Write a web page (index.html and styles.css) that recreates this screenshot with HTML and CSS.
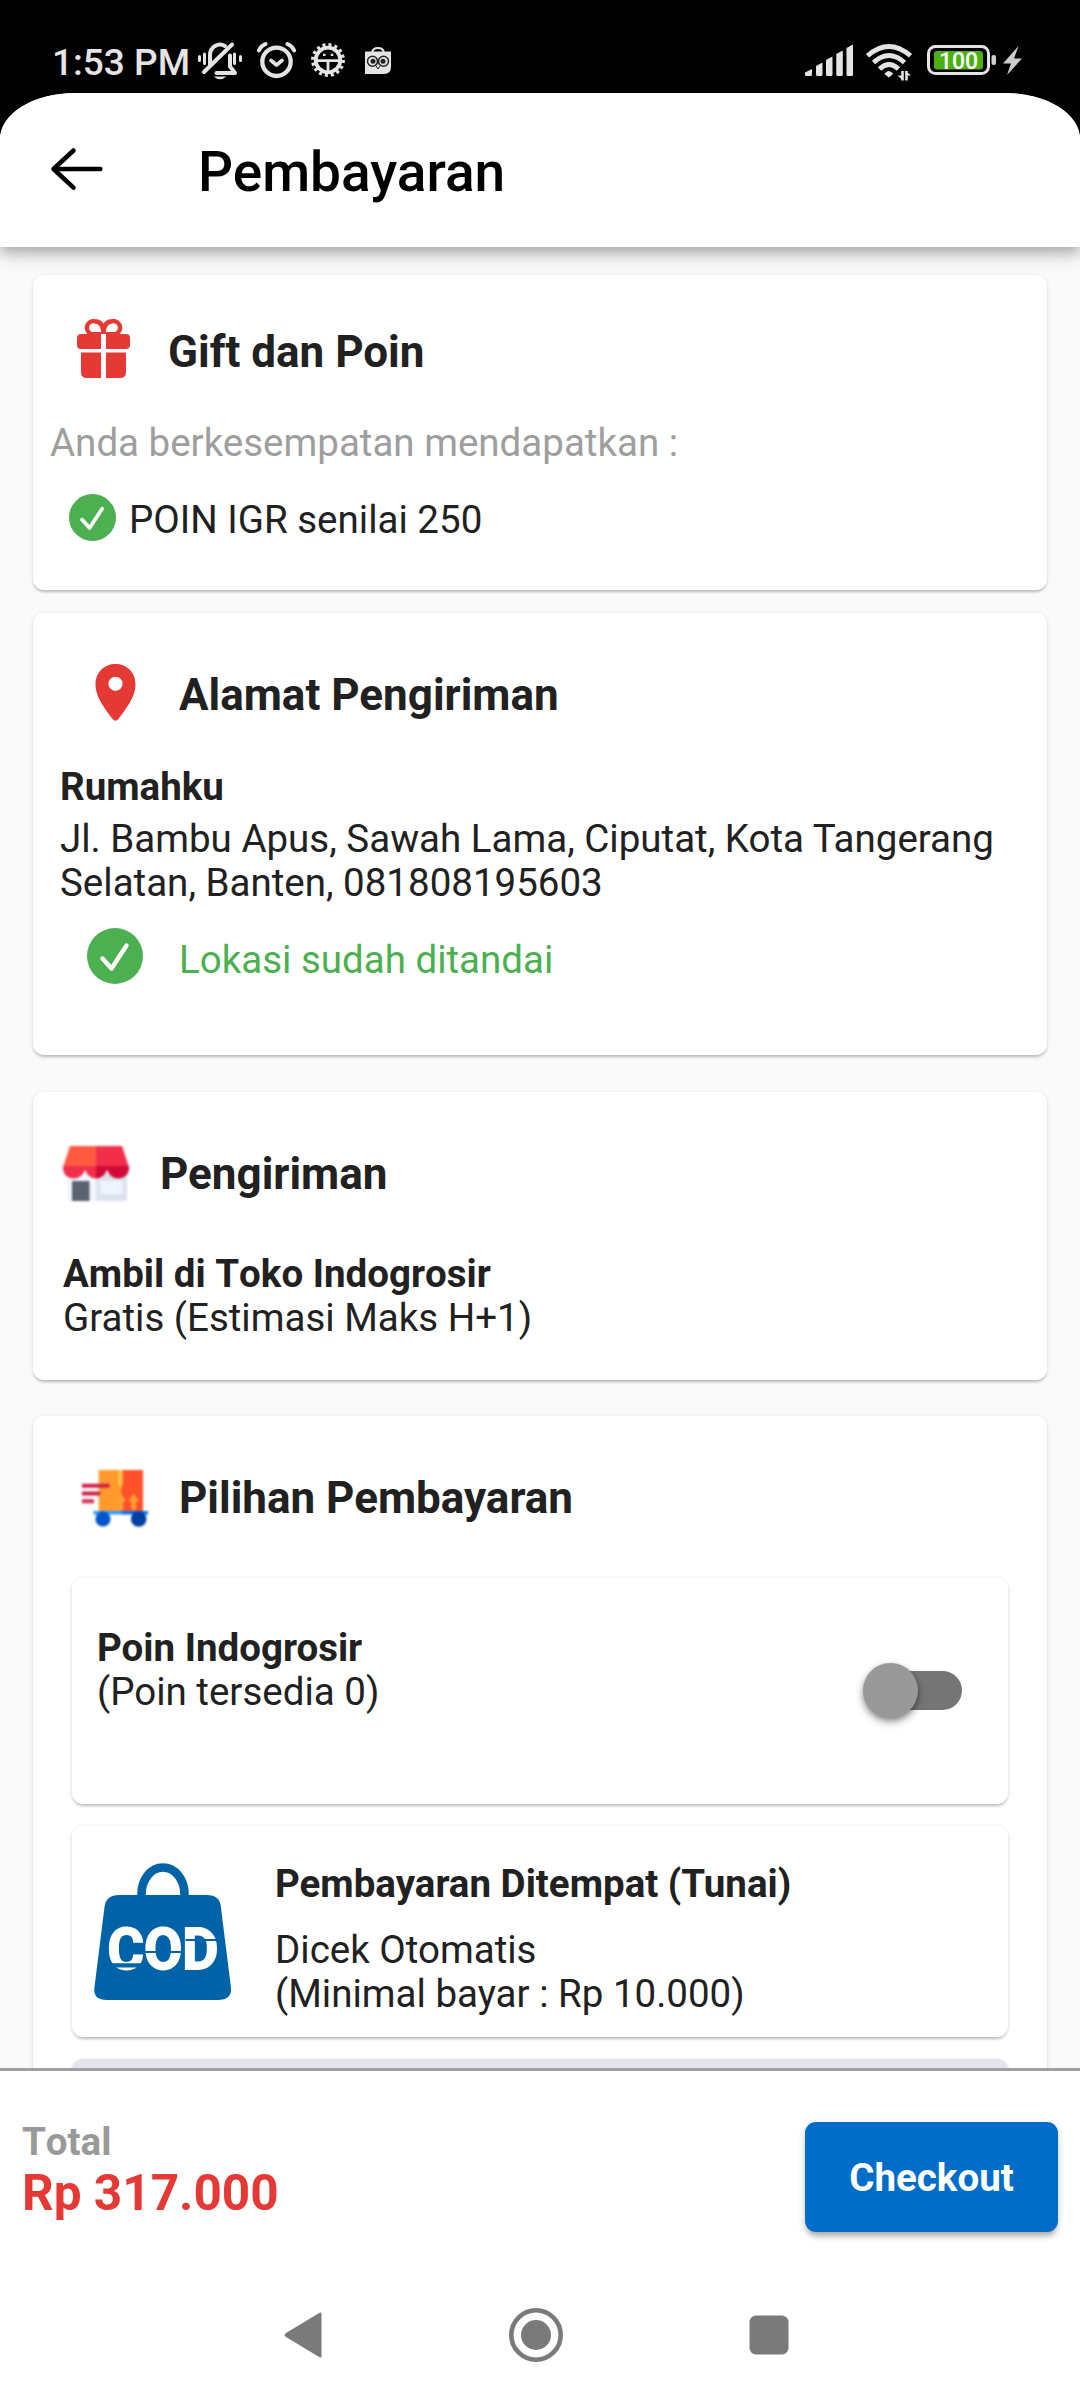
FILE: index.html
```html
<!DOCTYPE html>
<html lang="id">
<head>
<meta charset="utf-8">
<title>Pembayaran</title>
<link rel="stylesheet" href="styles.css">
</head>
<body>
<div class="screen">
  <div class="status">
    <span class="clock">1:53 PM</span>
    <svg class="status-left" viewBox="196 38 200 44" width="200" height="44">
      <g fill="none" stroke="#e4e4e4" stroke-width="4" stroke-linecap="round" stroke-linejoin="round">
        <path d="M199.500 56.500v4M204.500 54v9.500M234.500 54v9.500M240.500 56.500v4" stroke-width="3"/>
        <path d="M210 65.500V55a10 10.500 0 0 1 15-9"/>
        <path d="M216.500 73H235l-5-6.500V55.500"/>
        <path d="M204 72L232 44.500"/>
      </g>
      <path d="M213.500 76.500h13q-6.500 5.500-13 0z" fill="#e4e4e4"/>
      <g fill="none" stroke="#e4e4e4" stroke-linecap="round" stroke-linejoin="round">
        <circle cx="276.500" cy="61.800" r="14.200" stroke-width="4.300"/>
        <path d="M271 60.500l5.500 4.500 5.500-4.500" stroke-width="3.600"/>
        <path d="M258.800 50.500q2-4.500 6.800-6.500M294.200 50.500q-2-4.500-6.800-6.500" stroke-width="4"/>
      </g>
      <circle cx="328" cy="60" r="15.200" fill="none" stroke="#e4e4e4" stroke-width="3.500" stroke-dasharray="3 2.969"/>
      <circle cx="328" cy="60" r="12.300" fill="none" stroke="#e4e4e4" stroke-width="3.800"/>
      <path d="M316 60.700h24M328 61v12" stroke="#e4e4e4" stroke-width="2.800"/>
      <path d="M323 54.800h2.500M330.800 54.800h2.500" stroke="#e4e4e4" stroke-width="2.200"/>
      <path d="M365 51.500h26v15.500q0 7-7 7h-19z" fill="#e4e4e4"/>
      <path d="M372.300 52q.7-4 5.700-4t5.700 4" fill="none" stroke="#e4e4e4" stroke-width="2.200"/>
      <g fill="#e4e4e4" stroke="#222" stroke-width="1.500"><circle cx="372.500" cy="61.300" r="5"/><circle cx="383.500" cy="61.300" r="5"/></g>
      <circle cx="373" cy="61.300" r="2.500" fill="#222"/><circle cx="383" cy="61.300" r="2.500" fill="#222"/>
      <path d="M375.500 65l2.500-1.500 2.500 1.500-2.500 4z" fill="#e4e4e4" stroke="#222"/>
    </svg>
    <svg class="status-right" viewBox="802 38 222 44" width="222" height="44">
      <path fill="#e4e4e4" d="M805 72.500l6-3q1-.5 1 .5v4.500q0 1.500-1.500 1.500H806.500q-1.500 0-1.500-1.500zM816 66l5.500-3q1-.5 1 .5v11q0 1.500-1.500 1.500h-3.500q-1.500 0-1.500-1.500zM826 60l5.500-3q1-.5 1 .5v17q0 1.500-1.500 1.500h-3.500q-1.500 0-1.500-1.500zM836.300 54l5.500-3q1-.5 1 .5v23q0 1.500-1.500 1.500h-3.500q-1.500 0-1.500-1.500zM846.500 48l5.500-3q1-.5 1 .5v29q0 1.500-1.500 1.500h-3.500q-1.500 0-1.500-1.500z"/>
      <g fill="none" stroke="#e4e4e4" stroke-width="4.800">
        <path d="M867.500 55.800q21.500-18.500 43 0"/>
        <path d="M873.500 62.500q15.500-14 31 0"/>
        <path d="M879.500 69q9.500-9 19 0"/>
      </g>
      <path d="M884.500 73.500q4.200-5 8.500 0v.5l-4.200 3.500-4.300-3.500z" fill="#e4e4e4"/>
      <path d="M902.500 71v9.500M906.500 80.500v-9.500" stroke="#e4e4e4" stroke-width="2.600"/>
      <path d="M897.500 75.500h4l1.500 5zM905.500 71l5.500 4.500h-4z" fill="#e4e4e4"/>
      <rect x="928.500" y="46.500" width="60" height="27" rx="7" fill="#000" stroke="#e4e4e4" stroke-width="3"/>
      <rect x="934" y="51" width="49" height="18.500" rx="3" fill="#4cb013"/>
      <rect x="991.500" y="55" width="4.500" height="10" rx="2" fill="#d0d0d0"/>
      <text x="958.500" y="69" text-anchor="middle" class="battery-text">100</text>
      <path d="M1018.500 46L1003 63.500h8L1007 75l15-16.500h-8z" fill="#ccc"/>
    </svg>
  </div>

  <div class="app">
    <header class="appbar">
      <svg width="56" height="46" viewBox="0 0 56 46"><path d="M51.300 23H4.800M24.500 4.500L4.500 23l20 18.700" fill="none" stroke="#000" stroke-width="4.500" stroke-linecap="round" stroke-linejoin="round"/></svg>
      <h1>Pembayaran</h1>
    </header>

    <main class="content">
      <section class="card gift">
        <div class="head">
          <svg width="53" height="59" viewBox="0 0 53 59" fill="#e53935">
            <path d="M4 15h20v15H4q-4 0-4-4v-7q0-4 4-4zM29 15h20q4 0 4 4v7q0 4-4 4H29zM4 33.500h20V59H10q-6 0-6-6zM29 33.500h20V53q0 6-6 6H29z"/>
            <path d="M24 15.300H17A6.600 6.600 0 1 1 17.500 2.200Q26.500 2.200 26.500 15Q26.500 2.200 35.500 2.200A6.600 6.600 0 1 1 36 15.300H29" fill="none" stroke="#e53935" stroke-width="4.400"/>
          </svg>
          <h2>Gift dan Poin</h2>
        </div>
        <p class="muted">Anda berkesempatan mendapatkan :</p>
        <div class="row">
          <svg width="47" height="47" viewBox="0 0 56 56"><circle cx="28" cy="28" r="28" fill="#4caf50"/><path d="M15.500 30.500l9 10L39.500 17.500" fill="none" stroke="#fff" stroke-width="4.400" stroke-linecap="round" stroke-linejoin="round"/></svg>
          <p>POIN IGR senilai 250</p>
        </div>
      </section>

      <section class="card address">
        <div class="head">
          <svg width="41" height="57" viewBox="0 0 41 57"><path fill="#e53935" fill-rule="evenodd" d="M20.500 0C31.500 0 40.500 8 40.500 20.500c0 14-12 27-17 34.500q-3 3.500-6 0C12.500 47.500 .5 34.500 .5 20.500 .5 8 9.500 0 20.500 0zM20.500 12.700a7.100 7.100 0 1 0 0 14.200 7.100 7.100 0 0 0 0-14.200z"/></svg>
          <h2>Alamat Pengiriman</h2>
        </div>
        <p class="strong">Rumahku</p>
        <p class="lines">Jl. Bambu Apus, Sawah Lama, Ciputat, Kota Tangerang<br>Selatan, Banten, 081808195603</p>
        <div class="row">
          <svg width="56" height="56" viewBox="0 0 56 56"><circle cx="28" cy="28" r="28" fill="#4caf50"/><path d="M15.500 30.500l9 10L39.500 17.500" fill="none" stroke="#fff" stroke-width="4.400" stroke-linecap="round" stroke-linejoin="round"/></svg>
          <p>Lokasi sudah ditandai</p>
        </div>
      </section>

      <section class="card shipping">
        <div class="head">
          <svg class="soft" width="66" height="56" viewBox="0 0 66 56">
            <path d="M4 27h29v28H4z" fill="#f3f6fd"/><path d="M33 27h31v28H33z" fill="#dde2ee"/>
            <rect x="37.500" y="35" width="22" height="13" fill="#eff4ff"/>
            <path d="M9 35h17.500v20H9z" fill="#5b6272"/>
            <path d="M7 0h26v21H0z" fill="#ff5a40"/><path d="M33 0h26l7 21H33z" fill="#f22f4a"/>
            <path d="M0 20h33v12.500q-7.500 0-11-8.500-3.500 8.500-11 8.500Q2 32.500 0 24z" fill="#f22f4a"/>
            <path d="M33 20h33v4q-2 8.500-11 8.500-7.500 0-11-8.500-3.500 8.500-11 8.500z" fill="#d20a36"/>
          </svg>
          <h2>Pengiriman</h2>
        </div>
        <p class="strong">Ambil di Toko Indogrosir</p>
        <p>Gratis (Estimasi Maks H+1)</p>
      </section>

      <section class="card payment">
        <div class="head">
          <svg class="soft" width="66" height="60" viewBox="0 0 66 60">
            <path d="M16.700 1H41v41H16.700z" fill="#ff9a2d"/><path d="M39.500 1H61v41H39.500z" fill="#ff502c"/>
            <path d="M36.300 1h4.500v15l-2.300 2-2.200-2z" fill="#ffc245"/>
            <path d="M33.500 32.500l5.500-8 5.500 8h-3.300v8.500h-4.400v-8.500zM46.200 32.500l5.500-8 5.500 8h-3.300v8.500h-4.400v-8.500z" fill="#ffa030"/>
            <path d="M0 14.700h27.500v4H0zM0 22.600h18.300v4H0z" fill="#d31d45"/><path d="M0 30h12v4.500H0z" fill="#d8405f"/>
            <path d="M11.500 42H40v3.500H11.500z" fill="#2b9bff"/><path d="M40 42h26v3.500H40z" fill="#0b6fe8"/>
            <circle cx="21" cy="50" r="7.600" fill="#0055cc"/><circle cx="56.700" cy="50" r="7.800" fill="#003fa3"/>
          </svg>
          <h2>Pilihan Pembayaran</h2>
        </div>

        <div class="option points">
          <div>
            <p class="strong">Poin Indogrosir</p>
            <p>(Poin tersedia 0)</p>
          </div>
          <div class="switch"><div class="thumb"></div></div>
        </div>

        <div class="option cod">
          <svg width="138" height="138" viewBox="0 0 138 138">
            <path d="M47.500 34V31a21.500 26.500 0 0 1 43 0v3" fill="none" stroke="#0063a8" stroke-width="8.600"/>
            <path d="M25 32H112.500q14 0 14.500 13L137 125q1 12-13 12H12.500q-14 0-12-13L10.500 44Q12 32 25 32z" fill="#0063a8"/>
            <text x="13.500" y="106" class="cod-text" textLength="111" lengthAdjust="spacingAndGlyphs">COD</text>
            <path d="M14 101.300h35M14 103.500h35M51 89h38M91.500 77h34" stroke="#0063a8" stroke-width="2.200"/>
          </svg>
          <div>
            <p class="strong">Pembayaran Ditempat (Tunai)</p>
            <p class="note">Dicek Otomatis<br>(Minimal bayar : Rp 10.000)</p>
          </div>
        </div>

        <div class="option disabled"></div>
      </section>
    </main>

    <footer class="total">
      <div>
        <p class="label">Total</p>
        <p class="amount">Rp 317.000</p>
      </div>
      <button class="checkout" type="button">Checkout</button>
    </footer>

    <nav class="navbar">
      <svg width="38" height="46" viewBox="0 0 38 46"><path d="M36 .5q1.500-.5 1.500 1.500v42q0 2-1.500 1.500L2 25q-3-2 0-4z" fill="#7a7a7a"/></svg>
      <svg width="56" height="56" viewBox="0 0 56 56"><circle cx="28" cy="28" r="24.700" fill="none" stroke="#7a7a7a" stroke-width="4.600"/><circle cx="28" cy="28" r="15" fill="#7a7a7a"/></svg>
      <svg width="40" height="40" viewBox="0 0 40 40"><rect x=".5" y=".5" width="39" height="39" rx="6.500" fill="#7a7a7a"/></svg>
    </nav>
  </div>
</div>
</body>
</html>
```
FILE: styles.css
```css
* { box-sizing: border-box; }
body { margin: 0; background: #000; font-family: Roboto, "Liberation Sans", sans-serif; color: #212121; }
p, h1, h2 { margin: 0; }
svg { display: block; flex: none; }
.soft { filter: blur(.9px); }

.screen { width: 1080px; height: 2400px; display: flex; flex-direction: column; overflow: hidden; background: #000; }

.status { height: 93px; flex: none; display: flex; align-items: flex-start; padding: 38px 56px 0 52px; }
.clock { width: 144px; padding-top: 3px; font-size: 37px; line-height: 44px; font-weight: 500; color: #e4e4e4; white-space: nowrap; }
.status-right { margin-left: auto; }
.battery-text { font: 500 23px Roboto, sans-serif; fill: #fff; }

.app { flex: 1; min-height: 0; display: flex; flex-direction: column; background: #fafafa; border-radius: 75px 75px 0 0 / 46px 46px 0 0; overflow: hidden; }
.appbar { height: 154px; flex: none; display: flex; align-items: flex-start; padding: 53px 0 0 49px; gap: 93px; background: #fff; box-shadow: 0 5px 11px rgba(0,0,0,.2), 0 11px 14px rgba(0,0,0,.09), 0 3px 28px rgba(0,0,0,.08); z-index: 1; position: relative; }
.appbar h1 { margin-top: -6px; font-size: 55px; line-height: 64px; font-weight: 500; color: #000; }

.content { height: 1821px; flex: none; padding: 28px 33px 0; overflow: hidden; font-size: 38.5px; line-height: 44px; }
.card, .option { background: #fff; border-radius: 11px; box-shadow: 0 3px 3px -1px rgba(0,0,0,.2), 0 1px 4px rgba(0,0,0,.12); }
.head, .row { display: flex; align-items: flex-start; }
.head h2 { font-size: 44px; line-height: 52px; font-weight: 700; }
.strong { font-weight: 700; }

.gift { height: 315px; padding: 44px 0 0 17px; }
.gift .head { padding-left: 27px; gap: 38px; }
.gift .head h2 { margin-top: 7px; }
.muted { margin-top: 43px; color: #9e9e9e; }
.gift .row { margin-top: 29px; padding-left: 19px; gap: 13px; }
.gift .row p { margin-top: 4px; }

.address { height: 442px; margin-top: 23px; padding: 51px 0 0 27px; }
.address .head { padding-left: 35px; gap: 43px; }
.address .head h2 { margin-top: 5px; }
.address .strong { margin-top: 44px; }
.lines { margin-top: 8px; white-space: nowrap; }
.address .row { margin-top: 23px; padding-left: 27px; gap: 36px; color: #4caf50; }
.address .row p { margin-top: 10px; }

.shipping { height: 288px; margin-top: 37px; padding: 54px 0 0 30px; }
.shipping .head { gap: 31px; }
.shipping .head h2 { margin-top: 2px; }
.shipping .strong { margin-top: 50px; font-kerning: none; }

.payment { height: 900px; margin-top: 36px; padding: 53px 39px 0; }
.payment .head { padding-left: 10px; gap: 31px; }
.payment .head h2 { margin-top: 3px; }
.option { display: flex; align-items: flex-start; }
.points { height: 226px; margin-top: 49px; padding: 48px 46px 0 25px; justify-content: space-between; }
.switch { width: 94px; height: 39px; margin-top: 45px; border-radius: 20px; background: #757575; }
.thumb { width: 55px; height: 55px; margin: -8px 0 0 -5px; border-radius: 50%; background: #999; box-shadow: 0 4px 8px rgba(0,0,0,.35), 0 2px 4px rgba(0,0,0,.2); }
.cod { height: 211px; margin-top: 22px; padding: 36px 0 0 22px; gap: 43px; }
.cod svg { margin-top: 1px; }
.cod-text { font: 700 57px Roboto, sans-serif; fill: #fff; stroke: #fff; stroke-width: 1.8px; }
.note { margin-top: 22px; }
.disabled { height: 200px; margin-top: 22px; background: #e4e4ea; }

.total { height: 205px; flex: none; display: flex; align-items: flex-start; justify-content: space-between; padding: 49px 22px 0; border-top: 3px solid #a0a0a0; background: #fff; font-size: 38.5px; line-height: 44px; }
.label { color: #999; font-weight: 700; font-kerning: none; }
.amount { font-size: 49.500px; line-height: 58px; font-weight: 700; color: #e53935; }
.checkout { width: 253px; height: 110px; margin-top: 2px; padding: 2px 0 0; border: 0; border-radius: 11px; background: #006ec9; color: #fff; font: 700 38.5px/44px Roboto, sans-serif; box-shadow: 0 6px 5px -2px rgba(0,0,0,.22), 0 3px 8px rgba(0,0,0,.16); }
.navbar { flex: 1; display: flex; align-items: flex-start; padding: 39px 291px 0 284px; justify-content: space-between; background: #fff; }
.navbar svg:nth-child(2) { margin-top: -5px; }
.navbar svg:nth-child(3) { margin-top: 3px; }
```
